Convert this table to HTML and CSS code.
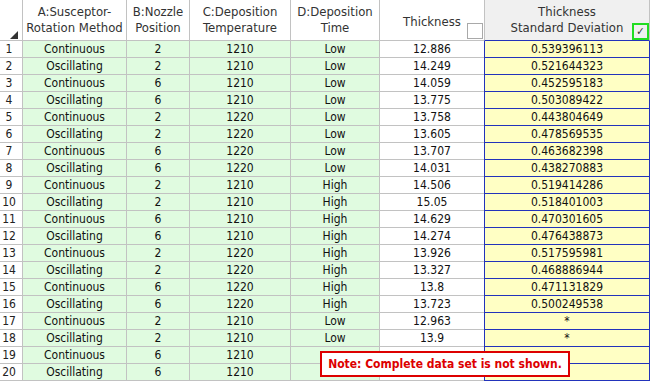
FILE: index.html
```html
<!DOCTYPE html>
<html>
<head>
<meta charset="utf-8">
<link rel="stylesheet" href="styles.css">
</head>
<body>
<div class="sheet">
  <div class="grid">
    <div class="hd hd-corner"><span class="corner-tri"></span></div>
    <div class="hd">A:Susceptor-<br>Rotation Method</div>
    <div class="hd">B:Nozzle<br>Position</div>
    <div class="hd">C:Deposition<br>Temperature</div>
    <div class="hd">D:Deposition<br>Time</div>
    <div class="hd hd-thick">Thickness<span class="chk"></span></div>
    <div class="hd hd-sd">Thickness<br>Standard Deviation<span class="chk chk-on">&#10003;</span></div>

    <div class="rn">1</div><div class="c g">Continuous</div><div class="c g">2</div><div class="c g">1210</div><div class="c g">Low</div><div class="c">12.886</div><div class="c sd">0.539396113</div>
    <div class="rn">2</div><div class="c g">Oscillating</div><div class="c g">2</div><div class="c g">1210</div><div class="c g">Low</div><div class="c">14.249</div><div class="c sd">0.521644323</div>
    <div class="rn">3</div><div class="c g">Continuous</div><div class="c g">6</div><div class="c g">1210</div><div class="c g">Low</div><div class="c">14.059</div><div class="c sd">0.452595183</div>
    <div class="rn">4</div><div class="c g">Oscillating</div><div class="c g">6</div><div class="c g">1210</div><div class="c g">Low</div><div class="c">13.775</div><div class="c sd">0.503089422</div>
    <div class="rn">5</div><div class="c g">Continuous</div><div class="c g">2</div><div class="c g">1220</div><div class="c g">Low</div><div class="c">13.758</div><div class="c sd">0.443804649</div>
    <div class="rn">6</div><div class="c g">Oscillating</div><div class="c g">2</div><div class="c g">1220</div><div class="c g">Low</div><div class="c">13.605</div><div class="c sd">0.478569535</div>
    <div class="rn">7</div><div class="c g">Continuous</div><div class="c g">6</div><div class="c g">1220</div><div class="c g">Low</div><div class="c">13.707</div><div class="c sd">0.463682398</div>
    <div class="rn">8</div><div class="c g">Oscillating</div><div class="c g">6</div><div class="c g">1220</div><div class="c g">Low</div><div class="c">14.031</div><div class="c sd">0.438270883</div>
    <div class="rn">9</div><div class="c g">Continuous</div><div class="c g">2</div><div class="c g">1210</div><div class="c g">High</div><div class="c">14.506</div><div class="c sd">0.519414286</div>
    <div class="rn">10</div><div class="c g">Oscillating</div><div class="c g">2</div><div class="c g">1210</div><div class="c g">High</div><div class="c">15.05</div><div class="c sd">0.518401003</div>
    <div class="rn">11</div><div class="c g">Continuous</div><div class="c g">6</div><div class="c g">1210</div><div class="c g">High</div><div class="c">14.629</div><div class="c sd">0.470301605</div>
    <div class="rn">12</div><div class="c g">Oscillating</div><div class="c g">6</div><div class="c g">1210</div><div class="c g">High</div><div class="c">14.274</div><div class="c sd">0.476438873</div>
    <div class="rn">13</div><div class="c g">Continuous</div><div class="c g">2</div><div class="c g">1220</div><div class="c g">High</div><div class="c">13.926</div><div class="c sd">0.517595981</div>
    <div class="rn">14</div><div class="c g">Oscillating</div><div class="c g">2</div><div class="c g">1220</div><div class="c g">High</div><div class="c">13.327</div><div class="c sd">0.468886944</div>
    <div class="rn">15</div><div class="c g">Continuous</div><div class="c g">6</div><div class="c g">1220</div><div class="c g">High</div><div class="c">13.8</div><div class="c sd">0.471131829</div>
    <div class="rn">16</div><div class="c g">Oscillating</div><div class="c g">6</div><div class="c g">1220</div><div class="c g">High</div><div class="c">13.723</div><div class="c sd">0.500249538</div>
    <div class="rn">17</div><div class="c g">Continuous</div><div class="c g">2</div><div class="c g">1210</div><div class="c g">Low</div><div class="c">12.963</div><div class="c sd">*</div>
    <div class="rn">18</div><div class="c g">Oscillating</div><div class="c g">2</div><div class="c g">1210</div><div class="c g">Low</div><div class="c">13.9</div><div class="c sd">*</div>
    <div class="rn">19</div><div class="c g">Continuous</div><div class="c g">6</div><div class="c g">1210</div><div class="c g"></div><div class="c"></div><div class="c sd"></div>
    <div class="rn">20</div><div class="c g">Oscillating</div><div class="c g">6</div><div class="c g">1210</div><div class="c g"></div><div class="c"></div><div class="c sd"></div>
  </div>
  <div class="note">Note: Complete data set is not shown.</div>
</div>
</body>
</html>
```
FILE: styles.css
```css
html, body {
  margin: 0;
  padding: 0;
  background: #ffffff;
}
body {
  font-family: "DejaVu Sans Condensed", "DejaVu Sans", Verdana, sans-serif;
  font-stretch: condensed;
  width: 650px;
  height: 381px;
  overflow: hidden;
}
.sheet {
  position: relative;
  width: 650px;
  height: 381px;
}
.grid {
  display: grid;
  grid-template-columns: 23px 104px 63px 101px 89px 104px 166px;
  grid-template-rows: 41px repeat(20, 17px);
}
.hd, .rn, .c {
  box-sizing: border-box;
  border-right: 1px solid #c2c2c2;
  border-bottom: 1px solid #c2c2c2;
  display: flex;
  align-items: center;
  justify-content: center;
  text-align: center;
  white-space: nowrap;
  overflow: hidden;
}
.hd {
  position: relative;
  font-size: 13px;
  line-height: 16px;
  color: #333333;
  background: #ffffff;
  overflow: visible;
}
.hd-thick {
  border-right: none;
  padding-top: 3px;
}
.hd-sd {
  background: #f0f0f0;
  border-left: 1px solid #c2c2c2;
  border-right: 1px solid #c2c2c2;
  border-bottom: 1px solid #2233bb;
}
.corner-tri {
  position: absolute;
  right: 4px;
  bottom: 1px;
  width: 0;
  height: 0;
  border-left: 8px solid transparent;
  border-bottom: 8px solid #333333;
}
.chk {
  position: absolute;
  right: 1px;
  bottom: 1px;
  width: 16px;
  height: 16px;
  box-sizing: border-box;
  border: 1px solid #a9a9a9;
  background: #ffffff;
}
.chk-on {
  right: 0;
  bottom: 0;
  width: 17px;
  height: 17px;
  border: 2px solid #22dd22;
  background: #f0f0f0;
  font-size: 11px;
  line-height: 13px;
  color: #333333;
  text-align: center;
}
.rn {
  font-size: 12px;
  color: #222222;
  background: #ffffff;
  padding-right: 4px;
}
.c {
  font-size: 12px;
  color: #111111;
  background: #ffffff;
}
.g {
  background: #e0fbe0;
}
.grid > .c:nth-child(7n+6) {
  border-right: none;
}
.sd {
  background: #ffffc4;
  border-left: 1px solid #2233bb;
  border-right: 1px solid #2233bb;
  border-bottom: 1px solid #2233bb;
}
.note {
  position: absolute;
  left: 320px;
  top: 351px;
  width: 250px;
  height: 26px;
  box-sizing: border-box;
  border: 2px solid #dd0000;
  background: #ffffff;
  color: #dd0000;
  font-weight: bold;
  font-size: 12px;
  display: flex;
  align-items: center;
  justify-content: center;
  white-space: nowrap;
}
```
